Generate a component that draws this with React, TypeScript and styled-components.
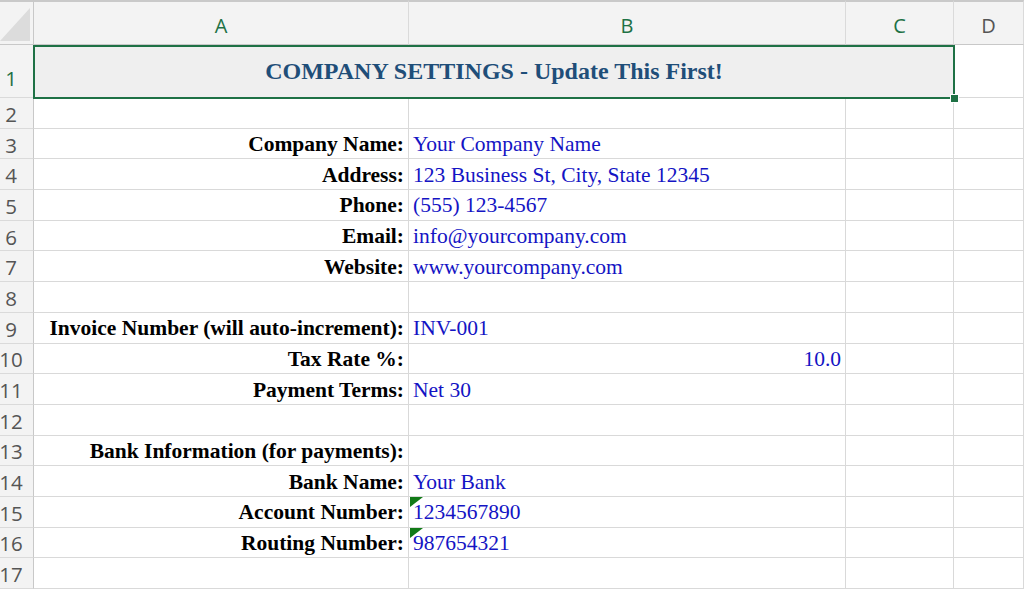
import React from "react"
import styled, { createGlobalStyle } from "styled-components"

const GlobalStyle = createGlobalStyle`
  html, body {
    margin: 0;
    padding: 0;
    background: #ffffff;
    overflow: hidden;
  }
  * {
    box-sizing: border-box;
  }
`

const green = "#1e7145"
const gridLine = "#d9d9d9"

// sheet grid: row header + columns A..D
const Sheet = styled.div`
  display: grid;
  grid-template-columns: 34px 375px 437px 108px 70px;
  grid-template-rows: 45px 53px repeat(16, 30.7px);
  width: 1024px;
  height: 590px;
  font-family: "Liberation Serif", "DejaVu Serif", serif;
`

const Corner = styled.div`
  background: #f3f3f3;
  border-top: 2px solid #c9c9c9;
  border-right: 1px solid #c8c8c8;
  border-bottom: 1px solid #c8c8c8;
  display: flex;
  align-items: flex-end;
  justify-content: flex-end;
  padding: 0 3px 3px 0;
`

const ColHeader = styled.div<{ $active?: boolean }>`
  background: #f3f3f3;
  border-top: 2px solid #c9c9c9;
  border-right: 1px solid #dadada;
  border-bottom: 1px solid #c8c8c8;
  display: flex;
  align-items: center;
  justify-content: center;
  padding-top: 5px;
  font-family: "Open Sans", "Liberation Sans", sans-serif;
  font-size: 20px;
  color: ${(p) => (p.$active ? green : "#555555")};
`

const RowHeader = styled.div<{ $active?: boolean }>`
  background: #f3f3f3;
  border-right: 1px solid #c8c8c8;
  border-bottom: 1px solid #dadada;
  display: flex;
  align-items: center;
  justify-content: center;
  padding-right: 11px;
  padding-top: 2px;
  font-family: "Open Sans", "Liberation Sans", sans-serif;
  font-size: 20.5px;
  color: ${(p) => (p.$active ? green : "#555555")};
  ${(p) => (p.$active ? "padding-top: 14px;" : "")}
`

const TitleCell = styled.div`
  grid-column: span 3;
  position: relative;
  z-index: 2;
  background: #efefef;
  display: flex;
  align-items: center;
  justify-content: center;
  font-weight: 700;
  font-size: 24px;
  color: #1f4e79;
`

const Selection = styled.div`
  position: absolute;
  left: -1px;
  top: 0;
  right: -1px;
  bottom: -1px;
  border: 2px solid ${green};
  pointer-events: none;
`

const Handle = styled.div`
  position: absolute;
  right: -6px;
  bottom: -6px;
  width: 9px;
  height: 9px;
  background: ${green};
  border: 1px solid #ffffff;
`

const Cell = styled.div<{ $align?: "left" | "right" }>`
  position: relative;
  border-right: 1px solid ${gridLine};
  border-bottom: 1px solid ${gridLine};
  display: flex;
  align-items: center;
  justify-content: ${(p) => (p.$align === "right" ? "flex-end" : "flex-start")};
  padding: 2px 4px 0 4px;
  white-space: nowrap;
  overflow: visible;
`

const LabelCell = styled(Cell)`
  font-weight: 700;
  font-size: 21.5px;
  color: #000000;
`

const ValueCell = styled(Cell)`
  font-size: 21.5px;
  color: #1414c4;
`

const ErrorFlag = styled.div`
  position: absolute;
  left: 1px;
  top: 0;
  width: 0;
  height: 0;
  border-top: 10px solid #117a17;
  border-right: 13px solid transparent;
`

type Row = {
  n: number
  label?: string
  value?: string
  align?: "left" | "right"
  flag?: boolean
}

const rows: Row[] = [
  { n: 2 },
  { n: 3, label: "Company Name:", value: "Your Company Name" },
  { n: 4, label: "Address:", value: "123 Business St, City, State 12345" },
  { n: 5, label: "Phone:", value: "(555) 123-4567" },
  { n: 6, label: "Email:", value: "info@yourcompany.com" },
  { n: 7, label: "Website:", value: "www.yourcompany.com" },
  { n: 8 },
  { n: 9, label: "Invoice Number (will auto-increment):", value: "INV-001" },
  { n: 10, label: "Tax Rate %:", value: "10.0", align: "right" },
  { n: 11, label: "Payment Terms:", value: "Net 30" },
  { n: 12 },
  { n: 13, label: "Bank Information (for payments):" },
  { n: 14, label: "Bank Name:", value: "Your Bank" },
  { n: 15, label: "Account Number:", value: "1234567890", flag: true },
  { n: 16, label: "Routing Number:", value: "987654321", flag: true },
  { n: 17 },
]

function CornerMark() {
  return (
    <svg width="30" height="33" viewBox="0 0 30 33">
      <polygon points="0,33 30,0 30,33" fill="#dcdcdc" />
    </svg>
  )
}

export default function App() {
  return (
    <>
      <GlobalStyle />
      <Sheet>
        <Corner>
          <CornerMark />
        </Corner>
        <ColHeader $active>A</ColHeader>
        <ColHeader $active>B</ColHeader>
        <ColHeader $active>C</ColHeader>
        <ColHeader>D</ColHeader>

        <RowHeader $active>1</RowHeader>
        <TitleCell>
          COMPANY SETTINGS - Update This First!
          <Selection>
            <Handle />
          </Selection>
        </TitleCell>
        <Cell />

        {rows.map((r) => (
          <React.Fragment key={r.n}>
            <RowHeader>{r.n}</RowHeader>
            <LabelCell $align="right">{r.label}</LabelCell>
            <ValueCell $align={r.align}>
              {r.flag && <ErrorFlag />}
              {r.value}
            </ValueCell>
            <Cell />
            <Cell />
          </React.Fragment>
        ))}
      </Sheet>
    </>
  )
}
